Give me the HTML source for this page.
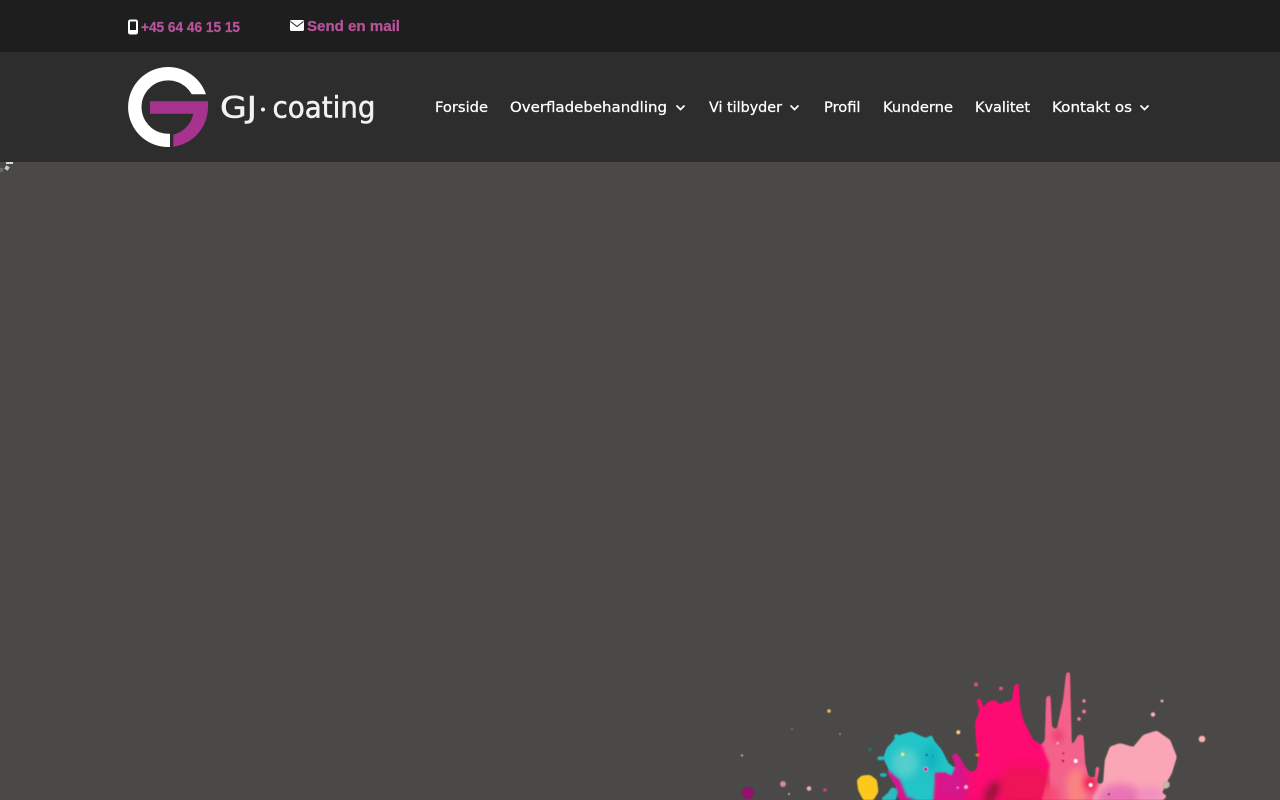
<!DOCTYPE html>
<html lang="da">
<head>
<meta charset="utf-8">
<title>GJ Coating</title>
<style>
html,body{margin:0;padding:0;width:1280px;height:800px;overflow:hidden;background:#4a4947}
svg{display:block}
.nav{font-family:"DejaVu Sans","Liberation Sans",sans-serif;font-size:14.5px;fill:#fff;stroke:#fff;stroke-width:.25}
.top{font-family:"Liberation Sans","DejaVu Sans",sans-serif;font-size:14.5px;font-weight:bold;fill:#b8529b;stroke:#b8529b;stroke-width:.25}
.logo{font-family:"DejaVu Sans","Liberation Sans",sans-serif;font-size:29px;fill:#f2f2f2;stroke:#f2f2f2;stroke-width:.5;filter:blur(.35px)}
.chev{fill:none;stroke:#fff;stroke-width:1.7}
</style>
</head>
<body>
<svg width="1280" height="800" viewBox="0 0 1280 800" xmlns="http://www.w3.org/2000/svg">
<defs>
<filter id="goo" filterUnits="userSpaceOnUse" x="700" y="640" width="560" height="200" color-interpolation-filters="sRGB">
<feGaussianBlur stdDeviation="1.2"/>
<feColorMatrix type="matrix" values="1 0 0 0 0 0 1 0 0 0 0 0 1 0 0 0 0 0 8 -3"/>
</filter>
<filter id="soft" filterUnits="userSpaceOnUse" x="700" y="640" width="560" height="200" color-interpolation-filters="sRGB"><feGaussianBlur stdDeviation=".45"/></filter>
<filter id="b4" filterUnits="userSpaceOnUse" x="700" y="640" width="560" height="200" color-interpolation-filters="sRGB"><feGaussianBlur stdDeviation="4"/></filter>
<path id="hotP" d="M960 758 L965 766.700 L970 772.300 L976.700 770 L978.300 758.300 L976 738.300 L975 723 L980 710 L976.300 700 L980 698 L983.300 708 L988.300 701.700 L995 700 L1000 705 L1005 701.500 L1011.700 701.700 L1014.500 685 L1018.500 683 L1020 706.700 L1023 720 L1033 740 L1041.700 745 L1050 760 L1050 800 L935 800 L935 773 L945 773 L951.700 776.700 L956 766.700 L951.700 755 L956.700 753.300 Z"/>
<path id="salP" d="M1041.700 745 L1045 740 L1046.300 697 L1050.300 695 L1051.700 726.700 L1056.700 730 L1063.300 700 L1066.300 673 L1069.800 671.700 L1070.700 710 L1071.700 746.700 L1078.300 735 L1083.300 735 L1085 763.300 L1088.300 776.700 L1095 778 L1096 766.700 L1099.300 766.700 L1096.700 783.300 L1103.300 785 L1108 800 L1042 800 L1050 765 Z"/>
<path id="paleP" d="M1098 785 L1103.300 783 L1105 760 L1110 746.700 L1120 743.300 L1133.300 747.300 L1143.300 735 L1156.700 730.700 L1170 740 L1176.700 756.700 L1171.700 773.300 L1166.700 782 L1161.700 793 L1167 796 L1163 800 L1092 800 Z"/>
<path id="cyanP" d="M883.300 758 L886.700 748.300 L893.300 741 L895 738.300 L900 735 L911.700 731.700 L920 735.700 L926 738.300 L931.700 735 L934 741 L941.700 750 L948.300 763.300 L955 768.300 L951.700 775 L945 772.300 L936 771.700 L935 781.700 L933.300 800 L916.700 800 L906.700 796.700 L900 780 L890 771.700 Z"/>
<clipPath id="hotC"><use href="#hotP"/></clipPath>
<clipPath id="salC"><use href="#salP"/></clipPath>
<clipPath id="paleC"><use href="#paleP"/></clipPath>
<clipPath id="cyanC"><use href="#cyanP"/></clipPath>
</defs>
<rect width="1280" height="800" fill="#4a4947"/>
<rect width="1280" height="52" fill="#1e1e1e"/>
<rect y="52" width="1280" height="110" fill="#2d2d2d"/>

<!-- top bar -->
<rect x="129" y="20.500" width="8" height="13" rx="1.300" fill="none" stroke="#fff" stroke-width="2"/>
<rect x="129" y="30" width="8" height="3.500" fill="#fff"/>
<text class="top" x="141" y="32" textLength="99" lengthAdjust="spacingAndGlyphs">+45 64 46 15 15</text>
<rect x="290" y="20" width="14" height="11" rx="1.500" fill="#fff"/>
<path d="M290.500 21.500 L297 26.500 L303.500 21.500" fill="none" stroke="#1e1e1e" stroke-width="1"/>
<text class="top" x="307" y="31" textLength="93" lengthAdjust="spacingAndGlyphs">Send en mail</text>

<!-- logo -->
<path d="M206 94.300 A40 40 0 1 0 170 147 L170 133.700 A26.700 26.700 0 1 1 191.700 94.300 Z" fill="#fff"/>
<path d="M150 101.300 H208 V107 A40 40 0 0 1 173.300 146.700 V134.700 A26.700 26.700 0 0 0 193.300 113.700 H150 Z" fill="#a8338f"/>
<text class="logo" x="220" y="117.500" textLength="37" lengthAdjust="spacingAndGlyphs">GJ</text>
<circle cx="263" cy="109.500" r="2" fill="#f2f2f2"/>
<text class="logo" x="272.500" y="117.500" textLength="103" lengthAdjust="spacingAndGlyphs">coating</text>

<!-- nav -->
<text class="nav" x="435" y="112" textLength="53" lengthAdjust="spacingAndGlyphs">Forside</text>
<text class="nav" x="510" y="112" textLength="157" lengthAdjust="spacingAndGlyphs">Overfladebehandling</text>
<path class="chev" d="M676.500 105.500 L680.500 109.500 L684.500 105.500"/>
<text class="nav" x="709" y="112" textLength="73" lengthAdjust="spacingAndGlyphs">Vi tilbyder</text>
<path class="chev" d="M790.500 105.500 L794.500 109.500 L798.500 105.500"/>
<text class="nav" x="824" y="112" textLength="36.500" lengthAdjust="spacingAndGlyphs">Profil</text>
<text class="nav" x="883" y="112" textLength="70" lengthAdjust="spacingAndGlyphs">Kunderne</text>
<text class="nav" x="975" y="112" textLength="55" lengthAdjust="spacingAndGlyphs">Kvalitet</text>
<text class="nav" x="1052" y="112" textLength="80" lengthAdjust="spacingAndGlyphs">Kontakt os</text>
<path class="chev" d="M1140.500 105.500 L1144.500 109.500 L1148.500 105.500"/>

<!-- corner fragments -->
<rect x="6" y="162" width="7" height="2" fill="#d8d8d8"/>
<rect x="5" y="166" width="4" height="4" fill="#c8c8c8" transform="rotate(30 7 168)"/>
<rect x="0" y="168" width="3" height="4" fill="#6a6a68"/>

<!-- splash -->
<g filter="url(#soft)">
<g filter="url(#goo)">
<path d="M887 772 L893 782 L898 790 L899 800 L936 800 L936 770 L895 765 Z" fill="#d5168c"/>
<use href="#cyanP" fill="#22c4c8"/>
<path d="M880 800 L888 793 L892 787 L897 790 L896 800 Z" fill="#26bcc0"/>
<path d="M857 780 L861.700 775.700 L870 775 L876.700 780 L878.300 791.700 L873.300 800 L863.300 800 L858.300 790 Z" fill="#fdc81e"/>
<use href="#hotP" fill="#fd0a72"/>
<use href="#salP" fill="#f4628c"/>
<use href="#paleP" fill="#fba6b6"/>
</g>
<g clip-path="url(#cyanC)">
<ellipse cx="905" cy="763" rx="13" ry="15" fill="#68d4d0" opacity=".7" filter="url(#b4)"/>
<ellipse cx="932" cy="758" rx="7" ry="14" fill="#14b4c0" filter="url(#b4)"/>
</g>
<g clip-path="url(#hotC)">
<rect x="935" y="750" width="32" height="50" fill="#d5168c" filter="url(#b4)"/>
<ellipse cx="1025" cy="785" rx="28" ry="20" fill="#e8184e" opacity=".7" filter="url(#b4)"/>
<ellipse cx="992" cy="792" rx="6" ry="12" fill="#a0123e" transform="rotate(30 992 792)" filter="url(#b4)"/>
<path d="M985 800 L993 784 L998 785 L994 800 Z" fill="#a8123f" opacity=".7"/>
</g>
<g clip-path="url(#salC)">
<ellipse cx="1077" cy="788" rx="11" ry="20" fill="#fa8484" filter="url(#b4)"/>
<ellipse cx="1090" cy="783" rx="6" ry="8" fill="#f01450" filter="url(#b4)"/>
<ellipse cx="1050" cy="795" rx="8" ry="10" fill="#f84870" filter="url(#b4)"/>
<ellipse cx="1058" cy="736" rx="3" ry="6" fill="#e82050" filter="url(#b4)"/>
</g>
<g clip-path="url(#paleC)">
<ellipse cx="1120" cy="798" rx="22" ry="14" fill="#e874b4" filter="url(#b4)"/>
<ellipse cx="1150" cy="795" rx="14" ry="8" fill="#f090c0" filter="url(#b4)"/>
</g>
<ellipse cx="1166" cy="785" rx="4" ry="3.500" fill="#c8b4a4" transform="rotate(-40 1166 785)"/>
<circle cx="748" cy="793" r="6" fill="#93106f"/>
<circle cx="783" cy="784" r="3" fill="#d884ae"/>
<circle cx="809" cy="788.500" r="2.300" fill="#f0a8c0"/>
<circle cx="825" cy="790" r="1.800" fill="#c8408c"/>
<circle cx="789" cy="794" r="1" fill="#e8b8a8"/>
<circle cx="742" cy="755.500" r="1" fill="#e8c8b8"/>
<circle cx="829" cy="711" r="1.800" fill="#f0c060"/>
<circle cx="792" cy="729" r=".8" fill="#a88"/>
<circle cx="840" cy="734" r="1" fill="#b89078"/>
<circle cx="958.300" cy="732.300" r="2" fill="#f4d080"/>
<circle cx="976" cy="684.500" r="2" fill="#d85080"/>
<circle cx="1001" cy="688.500" r="2" fill="#d85080"/>
<circle cx="1084" cy="701" r="1.800" fill="#f08098"/>
<circle cx="1084" cy="711.500" r="2" fill="#f07090"/>
<circle cx="1079" cy="719" r="1.800" fill="#f08098"/>
<circle cx="1162" cy="701" r="1.500" fill="#f8a0a8"/>
<circle cx="1153" cy="714.500" r="2.200" fill="#fcb0b8"/>
<circle cx="1202" cy="739" r="3.300" fill="#fcb0b0"/>
<circle cx="1075.700" cy="761" r="2" fill="#fff"/>
<circle cx="1090.700" cy="785" r="2" fill="#fff"/>
<circle cx="1063.300" cy="753.300" r="1.200" fill="#d8204c"/>
<circle cx="1063" cy="761" r="1.200" fill="#c8103c"/>
<circle cx="1057.700" cy="743.300" r="1.200" fill="#fcc0d0"/>
<circle cx="1109" cy="794.300" r="1" fill="#901850"/>
<circle cx="925.700" cy="769.300" r="2.500" fill="#e8a0c8"/>
<circle cx="925.700" cy="769.300" r="1.400" fill="#a02080"/>
<circle cx="902.700" cy="754.300" r="1.800" fill="#f4e080"/>
<circle cx="926.700" cy="755" r="1" fill="#105868"/>
<circle cx="933" cy="756.700" r=".8" fill="#1880a0"/>
<circle cx="966" cy="787" r="2" fill="#f4b0c8"/>
<circle cx="957.700" cy="787.700" r="1.200" fill="#f090c0"/>
<ellipse cx="977.500" cy="755" rx="2" ry="1.500" fill="#e87830"/>
<circle cx="870" cy="749.300" r="1.700" fill="#1a7a78"/>
<ellipse cx="880.700" cy="758.300" rx="3.500" ry="2" fill="#22bcc0"/>
<ellipse cx="883.300" cy="775" rx="3.500" ry="2" fill="#22b4b8"/>
<circle cx="896.700" cy="736.700" r="2.500" fill="#22c4c8"/>
</g>
</svg>
</body>
</html>
